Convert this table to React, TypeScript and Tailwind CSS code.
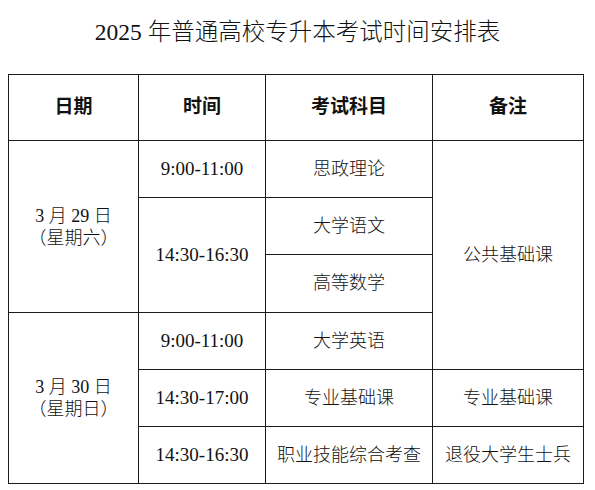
import React from "react";

const font = { fontFamily: '"Liberation Serif", "Noto Sans CJK SC", serif' };

const td = "border border-[#1a1a1a] text-center align-middle p-0 text-[18px] font-light text-[#111]";
const tdt = "border border-[#1a1a1a] text-center align-middle p-0 text-[19px] font-normal text-[#111]";
const th = "border border-[#1a1a1a] text-center align-middle p-0 text-[19px] font-bold text-[#111]";

export default function App() {
  return (
    <div className="w-[595px] h-[490px] bg-white" style={font}>
      <div className="pt-[20px] text-center text-[23.5px] leading-[24px] font-light text-[#111]">
        2025 年普通高校专升本考试时间安排表
      </div>
      <table className="mt-[30px] ml-[8px] w-[575px] border-collapse table-fixed border border-[#1a1a1a]">
        <colgroup>
          <col className="w-[130px]" />
          <col className="w-[127px]" />
          <col className="w-[167px]" />
          <col className="w-[151px]" />
        </colgroup>
        <thead>
          <tr className="h-[66px]">
            <th className={th}>日期</th>
            <th className={th}>时间</th>
            <th className={th}>考试科目</th>
            <th className={th}>备注</th>
          </tr>
        </thead>
        <tbody>
          <tr className="h-[57px]">
            <td className={td} rowSpan={3}>
              <div className="leading-[22px]">3 月 29 日</div>
              <div className="leading-[22px]">（星期六）</div>
            </td>
            <td className={tdt}>9:00-11:00</td>
            <td className={td}>思政理论</td>
            <td className={td} rowSpan={4}>公共基础课</td>
          </tr>
          <tr className="h-[57px]">
            <td className={tdt} rowSpan={2}>14:30-16:30</td>
            <td className={td}>大学语文</td>
          </tr>
          <tr className="h-[58px]">
            <td className={td}>高等数学</td>
          </tr>
          <tr className="h-[57px]">
            <td className={td} rowSpan={3}>
              <div className="leading-[22px]">3 月 30 日</div>
              <div className="leading-[22px]">（星期日）</div>
            </td>
            <td className={tdt}>9:00-11:00</td>
            <td className={td}>大学英语</td>
          </tr>
          <tr className="h-[57px]">
            <td className={tdt}>14:30-17:00</td>
            <td className={td}>专业基础课</td>
            <td className={td}>专业基础课</td>
          </tr>
          <tr className="h-[57px]">
            <td className={tdt}>14:30-16:30</td>
            <td className={td}>职业技能综合考查</td>
            <td className={td}>退役大学生士兵</td>
          </tr>
        </tbody>
      </table>
    </div>
  );
}
